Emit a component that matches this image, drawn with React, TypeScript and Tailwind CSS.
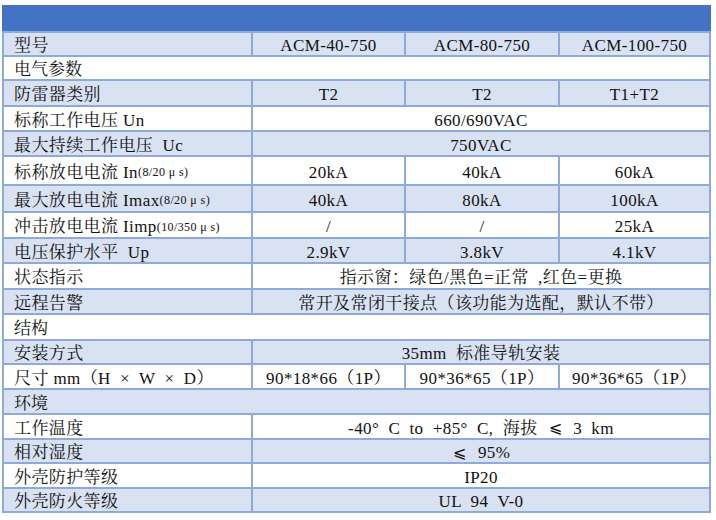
import React from "react";

type Row = {
  label: React.ReactNode;
  h: string;
  light: boolean;
  kind: "section" | "merged" | "three";
  values?: React.ReactNode[];
};

const small = (t: string) => <span className="text-[12px]">{t}</span>;
const le = <span className="inline-block w-[17px] text-center text-[16px] font-['DejaVu_Sans',sans-serif] font-light">⩽</span>;

const rows: Row[] = [
  { label: "型号", h: "h-[22px]", light: true, kind: "three", values: ["ACM-40-750", "ACM-80-750", "ACM-100-750"] },
  { label: "电气参数", h: "h-[22px]", light: false, kind: "section" },
  { label: "防雷器类别", h: "h-[24px]", light: true, kind: "three", values: ["T2", "T2", "T1+T2"] },
  { label: "标称工作电压 Un", h: "h-[23px]", light: false, kind: "merged", values: ["660/690VAC"] },
  { label: "最大持续工作电压  Uc", h: "h-[23px]", light: true, kind: "merged", values: ["750VAC"] },
  { label: <>标称放电电流 In{small("(8/20 μ s)")}</>, h: "h-[27px]", light: false, kind: "three", values: ["20kA", "40kA", "60kA"] },
  { label: <>最大放电电流 Imax{small("(8/20 μ s)")}</>, h: "h-[25px]", light: true, kind: "three", values: ["40kA", "80kA", "100kA"] },
  { label: <>冲击放电电流 Iimp{small("(10/350 μ s)")}</>, h: "h-[24px]", light: false, kind: "three", values: ["/", "/", "25kA"] },
  { label: "电压保护水平  Up", h: "h-[23px]", light: true, kind: "three", values: ["2.9kV", "3.8kV", "4.1kV"] },
  { label: "状态指示", h: "h-[24px]", light: false, kind: "merged", values: ["指示窗：绿色/黑色=正常  ,红色=更换"] },
  { label: "远程告警", h: "h-[23px]", light: true, kind: "merged", values: ["常开及常闭干接点（该功能为选配，默认不带）"] },
  { label: "结构", h: "h-[24px]", light: false, kind: "section" },
  { label: "安装方式", h: "h-[22px]", light: true, kind: "merged", values: ["35mm  标准导轨安装"] },
  { label: "尺寸 mm（H  ×  W  ×  D）", h: "h-[23px]", light: false, kind: "three", values: ["90*18*66（1P）", "90*36*65（1P）", "90*36*65（1P）"] },
  { label: "环境", h: "h-[23px]", light: true, kind: "section" },
  { label: "工作温度", h: "h-[23px]", light: false, kind: "merged", values: [<>-40°  C  to  +85°  C,  海拔  {le}  3  km</>] },
  { label: "相对湿度", h: "h-[22px]", light: true, kind: "merged", values: [<>{le}  95%</>] },
  { label: "外壳防护等级", h: "h-[23px]", light: false, kind: "merged", values: ["IP20"] },
  { label: "外壳防火等级", h: "h-[22px]", light: true, kind: "merged", values: ["UL  94  V-0"] },
];

export default function App() {
  return (
    <div className="bg-white w-[716px] h-[520px] pt-[5px] pl-[2px] text-[17px] text-[#111] leading-none font-['Liberation_Serif','Noto_Serif_CJK_SC','Noto_Sans_CJK_SC',serif]">
      <div className="w-[709px] h-[26px] bg-[#4472c4]" />
      <div className="w-[709px] grid grid-cols-[247px_151px_152px_149px] gap-[2px] p-[2px] bg-[#8eaadb]">
        {rows.map((r, i) => {
          const bg = r.light ? "bg-[#d9e2f3]" : "bg-white";
          if (r.kind === "section") {
            return (
              <div key={i} className={`col-span-4 flex items-center pl-[10px] pt-[3px] ${r.h} ${bg}`}>
                {r.label}
              </div>
            );
          }
          return (
            <React.Fragment key={i}>
              <div className={`flex items-center pl-[10px] pt-[3px] whitespace-pre tracking-[0.4px] ${r.h} ${bg}`}>
                {r.label}
              </div>
              {r.kind === "merged" ? (
                <div className={`col-span-3 flex items-center justify-center pt-[3px] whitespace-pre tracking-[0.4px] ${r.h} ${bg}`}>
                  {r.values![0]}
                </div>
              ) : (
                r.values!.map((v, j) => (
                  <div
                    key={j}
                    className={`flex items-center justify-center pt-[3px] whitespace-pre tracking-[0.4px] ${r.h} ${bg}`}
                  >
                    {v}
                  </div>
                ))
              )}
            </React.Fragment>
          );
        })}
      </div>
    </div>
  );
}
